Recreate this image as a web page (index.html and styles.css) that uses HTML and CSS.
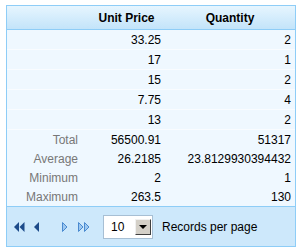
FILE: index.html
```html
<!DOCTYPE html>
<html lang="en">
<head>
  <meta charset="UTF-8" />
  <title>Products grid</title>
  <link rel="stylesheet" href="styles.css">
</head>
<body>
  <div class="grid">
    <table class="grid-table">
      <colgroup>
        <col class="col-label">
        <col class="col-price">
        <col class="col-qty">
      </colgroup>
      <thead>
        <tr>
          <th></th>
          <th>Unit Price</th>
          <th>Quantity</th>
        </tr>
      </thead>
      <tbody>
        <tr><td></td><td>33.25</td><td>2</td></tr>
        <tr><td></td><td>17</td><td>1</td></tr>
        <tr><td></td><td>15</td><td>2</td></tr>
        <tr><td></td><td>7.75</td><td>4</td></tr>
        <tr><td></td><td>13</td><td>2</td></tr>
      </tbody>
      <tfoot>
        <tr><td class="label">Total</td><td>56500.91</td><td>51317</td></tr>
        <tr><td class="label">Average</td><td>26.2185</td><td>23.8129930394432</td></tr>
        <tr><td class="label">Minimum</td><td>2</td><td>1</td></tr>
        <tr><td class="label">Maximum</td><td>263.5</td><td>130</td></tr>
      </tfoot>
    </table>
    <div class="pager">
      <div class="pager-nav">
        <svg class="nav dark first" width="11" height="10" viewBox="0 0 11 10">
          <polygon points="5,0 5,10 0,5" />
          <polygon points="10.5,0 10.5,10 5.5,5" />
        </svg>
        <svg class="nav dark prev" width="5" height="10" viewBox="0 0 5 10">
          <polygon points="5,0 5,10 0,5" />
        </svg>
        <svg class="nav light next" width="6" height="10" viewBox="0 0 6 10">
          <polygon points="0.5,0.5 0.5,9.5 5,5" />
        </svg>
        <svg class="nav light last" width="12" height="10" viewBox="0 0 12 10">
          <polygon points="0.5,0.5 0.5,9.5 5,5" />
          <polygon points="6.5,0.5 6.5,9.5 11,5" />
        </svg>
      </div>
      <div class="page-size">
        <span class="value">10</span>
        <span class="arrow"></span>
      </div>
      <span class="pager-text">Records per page</span>
    </div>
  </div>
</body>
</html>
```

FILE: styles.css
```css
body {
  margin: 0;
  padding: 5px 6px;
  font-family: 'Liberation Sans', Arial, sans-serif;
  font-size: 12px;
  color: #000;
  background: #fff;
}

.grid {
  width: 288px;
  border: 1px solid #8ecdf7;
}

.grid-table {
  width: 100%;
  border-collapse: collapse;
  table-layout: fixed;
  background: #eff8ff;
}

.col-label { width: 81px; }
.col-price { width: 77px; }

.grid-table th {
  height: 23px;
  padding: 0;
  font-weight: bold;
  text-align: center;
  background: linear-gradient(to bottom, #e6f5fe, #c3e4fa);
  border-bottom: 1px solid #8ecdf7;
}

.grid-table td {
  padding: 0 4px 0 0;
  text-align: right;
  white-space: nowrap;
}

.grid-table tbody td {
  height: 19px;
  border-bottom: 1px solid #f9fcff;
}

.grid-table tfoot td {
  height: 19px;
}

.grid-table tfoot .label {
  color: #777;
  padding-right: 10px;
}

.pager {
  display: flex;
  align-items: center;
  height: 39px;
  background: #cde8fb;
  border-top: 1px solid #8ecdf7;
}

.pager-nav {
  display: flex;
  align-items: center;
  padding-left: 7px;
  width: 89px;
}

.nav.prev { margin-left: 9px; }
.nav.next { margin-left: 23px; }
.nav.last { margin-left: 10px; }

.nav.dark polygon { fill: #1d4b8a; }
.nav.light polygon {
  fill: #9cc7ef;
  stroke: #4a8ad0;
  stroke-width: 1;
}

.page-size {
  display: flex;
  align-items: center;
  justify-content: space-between;
  box-sizing: border-box;
  width: 50px;
  height: 24px;
  padding: 0 1px 0 7px;
  background: #fff;
  border: 1px solid #a7bfd4;
}

.page-size .arrow {
  position: relative;
  box-sizing: border-box;
  width: 16px;
  height: 16px;
  background: #d4d0c8;
  border: 1px solid;
  border-color: #f0f0f0 #404040 #404040 #f0f0f0;
}

.page-size .arrow::after {
  content: "";
  position: absolute;
  left: 3px;
  top: 5px;
  border-left: 4px solid transparent;
  border-right: 4px solid transparent;
  border-top: 4px solid #000;
}

.pager-text {
  margin-left: 9px;
}
```
